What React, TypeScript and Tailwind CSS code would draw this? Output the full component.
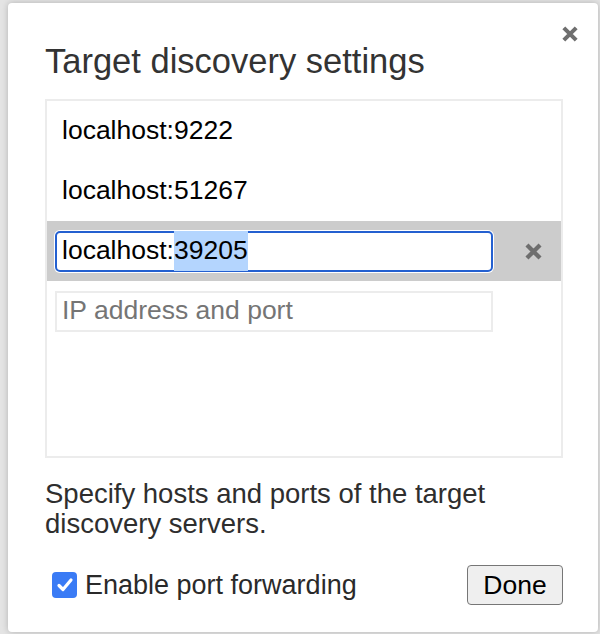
function Cross({ size = 14, color = "#777" }: { size?: number; color?: string }) {
  return (
    <svg width={size} height={size} viewBox="0 0 16 16">
      <path d="M2.5 2.5 L13.5 13.5 M13.5 2.5 L2.5 13.5" stroke={color} strokeWidth="3.6" strokeLinecap="butt" />
    </svg>
  );
}

export default function App() {
  const font = { fontFamily: '"Liberation Sans", Arial, sans-serif' };

  return (
    <div className="w-[600px] h-[634px] overflow-hidden bg-[#e4e4e4]" style={font}>
      <div className="relative ml-[8px] mt-[3px] w-[590px] h-[629px] rounded-[4px] bg-white shadow-[0_0_6px_rgba(0,0,0,0.22)] pl-[37px] pr-[35px] pt-[38px]">
        {/* close */}
        <div className="absolute right-[19px] top-[22px]">
          <Cross size={18} color="#6f6f6f" />
        </div>

        <h1 className="text-[34.5px] leading-[40px] text-[#333] font-normal">Target discovery settings</h1>

        {/* list of hosts */}
        <div className="mt-[18px] h-[359px] border-2 border-[#ececec] text-[26.5px] text-black">
          <div className="h-[60px] flex items-center pl-[15px]">localhost:9222</div>
          <div className="h-[60px] flex items-center pl-[15px]">localhost:51267</div>
          <div className="h-[60px] flex items-center bg-[#cccccc] pl-[8px]">
            <div className="w-[438px] h-[41px] rounded-[5px] border-2 border-[#2460d0] bg-white shadow-[0_0_0_1px_white] flex items-center pl-[5px]">
              <span>localhost:</span>
              <span className="bg-[#b4d5fe]">39205</span>
            </div>
            <div className="flex-1 flex justify-center pl-[12px]">
              <Cross size={19} color="#6e6e6e" />
            </div>
          </div>
          <div className="h-[60px] flex items-center pl-[8px]">
            <div className="w-[438px] h-[41px] border-2 border-[#ececec] flex items-center pl-[5px] text-[#757575]">
              IP address and port
            </div>
          </div>
        </div>

        <p className="mt-[21px] text-[27.5px] leading-[30px] text-[#2e2e2e]">
          Specify hosts and ports of the target
          <br />
          discovery servers.
        </p>

        <div className="mt-[26px] flex items-center justify-between">
          <label className="flex items-center ml-[7px] text-[27px] text-[#2a2a2a]">
            <span className="w-[25px] h-[26px] rounded-[4px] bg-[#3a7bf5] flex items-center justify-center">
              <svg width="18" height="18" viewBox="0 0 18 18">
                <path d="M3 9.5 L7 13.5 L15 4" stroke="white" strokeWidth="3.2" fill="none" strokeLinecap="round" strokeLinejoin="round" />
              </svg>
            </span>
            <span className="ml-[8px]">Enable port forwarding</span>
          </label>
          <button className="w-[96px] h-[40px] rounded-[4px] border border-[#767676] bg-[#efefef] text-[26.5px] text-black">
            Done
          </button>
        </div>
      </div>
    </div>
  );
}
